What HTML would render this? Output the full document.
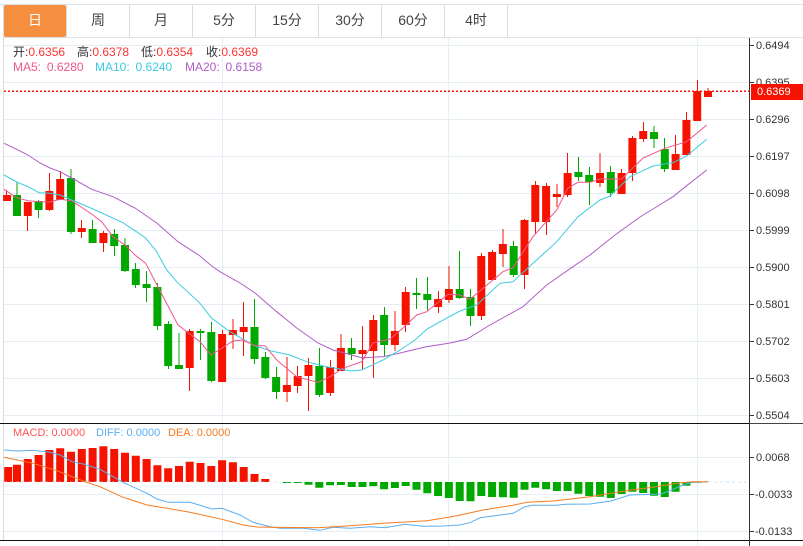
<!DOCTYPE html>
<html><head><meta charset="utf-8"><style>
html,body{margin:0;padding:0;background:#fff}
#w{position:relative;width:803px;height:546px;overflow:hidden;background:#fff;font-family:"Liberation Sans","Noto Sans CJK SC",sans-serif}
svg{position:absolute;left:0;top:0}
.t{position:absolute;top:5px;height:32px;line-height:31px;width:62px;text-align:center;font-size:14px;color:#444;font-family:"Liberation Sans","Noto Sans CJK SC",sans-serif}
.l{position:absolute;font-size:12px;line-height:16px;white-space:nowrap}
.m{font-size:11px}
.a{position:absolute;left:756px;font-size:11px;line-height:14px;color:#333}
</style></head><body><div id="w">
<svg width="803" height="546" viewBox="0 0 803 546" fill="none">
<!-- toolbar -->
<path d="M0 4.5H803M4 37.5H803" stroke="#dfe2e4"/>
<path d="M66.5 5V37M129.5 5V37M192.5 5V37M255.5 5V37M318.5 5V37M381.5 5V37M444.5 5V37M507.5 5V37" stroke="#d9dcde"/>
<path d="M3.5 4V423M3.5 424V540" stroke="#dcdcdc"/>
<rect x="4" y="5" width="62" height="32" rx="2" fill="#f68e3f"/>
<!-- grid -->
<path d="M4 45.5H749M4 82.5H749M4 119.5H749M4 156.5H749M4 193.5H749M4 230.5H749M4 267.5H749M4 304.5H749M4 341.5H749M4 378.5H749M4 415.5H749M4 457.5H749M4 494.5H749M4 531.5H749" stroke="#e4edf3"/>
<path d="M222.5 38V423M448.5 38V423M697.5 38V423M222.5 424V546M448.5 424V546M697.5 424V546" stroke="#e7eff6"/>
<!-- MACD bars -->
<path stroke="#f51300" stroke-width="8" d="M8.2 467V482M17 464.7V482M27.8 459V482M38.6 455V482M49.4 450V482M60.2 448.3V482M71 451.7V482M81.8 449V482M92.6 448V482M103.4 446.3V482M114.2 449V482M125 452.7V482M135.8 455.7V482M146.6 459V482M157.4 465.3V482M168.2 468.3V482M179 466V482M189.7 461.7V482M200.5 463V482M211.3 466V482M222.1 460.3V482M232.9 462.3V482M243.7 467V482M254.5 474V482M265.3 479V482"/>
<path stroke="#00a800" stroke-width="8" d="M286.9 482V483M297.7 482V483M308.5 482V484.7M319.3 482V487.7M330.1 482V485.3M340.9 482V485M351.7 482V487M362.5 482V487M373.3 482V486.3M384.1 482V489.3M394.9 482V488M405.7 482V486M416.5 482V489.7M427.3 482V493.3M438.1 482V496M448.9 482V498M459.7 482V501M470.5 482V501.3M481.3 482V496M492.1 482V497M502.9 482V497.3M513.7 482V497.7M524.5 482V489.7M535.3 482V487.7M546.1 482V489.3M556.9 482V491M567.6 482V491M578.4 482V493.7M589.2 482V496M600 482V496.7M610.8 482V498M621.6 482V494M632.4 482V491.7M643.2 482V493M654 482V495.7M664.8 482V497M675.6 482V491.7M686.4 482V485.7M697.2 482V482.8"/>
<path d="M708 482H746" stroke="#c5e6f5" stroke-dasharray="3 3"/>
<path d="M4 482H300" stroke="#c5e6f5" stroke-dasharray="3 3" stroke-opacity=".6"/>
<!-- MACD lines -->
<polyline stroke="#5aaef0" points="4,450 17,451 33,450.3 50,452.3 60,455 72,461.7 83,464 100,469.3 113,476.7 123,482.3 147,493.3 157,499 168,502.3 190,502.3 212,509 222,508.3 240,515 253,522.3 270,526.7 280,528.3 303,528.3 320,530.3 333,527.3 350,528.3 370,526.7 385,527.7 405,524.3 423,526.3 443,526 460,525 470,522.7 480,517.7 493,516 513,513.3 525,506.7 533,505.3 556,505.3 566,504.3 590,504 611,501 630,495 661,494 670,490.7 683,485 693,482.3 708,481.7"/>
<polyline stroke="#f77b1c" points="4,457.3 33,463.3 57,470.7 83,481 100,486.7 123,497.3 147,505 167,508.3 190,512.3 222,519.3 243,525 257,527 270,527.3 317,527.7 350,525.7 383,523.3 427,520.7 457,515.7 483,510 513,505.3 527,502.3 553,501 590,496.7 620,491.7 656,486.7 680,482.7 693,481.7 708,481.7"/>
<!-- wicks -->
<path stroke="#f51300" d="M6.5 190V195M27.5 216V231M49.5 173V211M60.5 171V179M81.5 220V238M103.5 231V252M189.5 329V391M222.5 330V334M233 319V349M243.5 302V356M287 357V402M297.5 366V393M308.5 358V411M330.5 360V396M341 334V348M362.5 326V370M373.5 315V378M395 311V351M405.5 287V332M438.5 291V313M449 266V303M481.5 253V320M492.5 250V252M503 229V267M524.5 219V289M535.5 181V234M546.5 183V235M557 184V207M567.5 153V197M600 153V187M621.5 169V173M632.5 136V181M643.5 122V142M675.5 135V154M686.5 112V120M697.5 80V91M708 88V91"/>
<path stroke="#00a800" d="M17 182V195M38.5 200V218M71 169V234M92.5 220V229M114.5 229V256M125 238V272M135.5 263V288M146.5 271V302M157.5 283V330M168.5 321V369M179 333V365M200.5 329V360M211.5 322V382M254.5 299V364M265.5 352V379M276.5 367V399M319.5 348V397M351.5 338V360M384.5 307V356M416.5 278V309M427.5 277V311M459.5 251V299M470.5 289V326M513.5 241V277M578.5 157V181M589.5 167V205M610.5 166V197M654 126V148M664.5 138V172"/>
<!-- bodies -->
<path stroke="#f51300" stroke-width="8" d="M7.1 195V201M27.8 202V216M49.4 191V210M60.2 179V200M81.8 228V232M103.4 233V243M189.7 331V368M222.1 334V382M232.9 330V335M243.7 327V332M286.9 385V392M297.7 376V386M308.5 365V376M330.1 367V393M340.9 348V371M362.5 350V354M373.3 320V351M394.9 331V345M405.7 292V325M438.1 299V307M448.9 289V300M481.3 256V316M492.1 252V280M502.9 244V254M524.5 220V275M535.3 185V222M546.1 186V222M556.9 194V197M567.6 173V195M600 173V183M621.6 173V194M632.4 138V173M643.2 131V139M675.6 154V170M686.4 120V155M697.2 91V121M708 91V97"/>
<path stroke="#00a800" stroke-width="8" d="M17 195V216M38.6 201V210M71 178V232M92.6 229V243M114.2 234V246M125 245V271M135.8 269V285M146.6 284V288M157.4 287V326M168.2 324V366M179 365V369M200.5 331V333M211.3 332V381M254.5 327V359M265.3 357V378M276.1 377V392M319.3 366V395M351.7 348V354M384.1 315V345M416.5 293V295M427.3 294V300M459.7 289V298M470.5 297V316M513.7 246V275M578.4 172V177M589.2 175V182M610.8 172V193M654 132V139M664.8 149V169"/>
<!-- MA lines -->
<polyline stroke="#b05cc8" points="4,143.3 16.7,149.3 28,155 40,163 50,168 60,171.7 71.7,178 91.7,189.3 113,196.7 135,208 156.7,223 178,241.7 200,256 211.7,266 220,271.7 240,283 255,293 276.7,311.7 296.7,328 318,343 333,350 361.7,357.7 383,356.7 400,353 425,347 450,343 466.7,339.3 490,325 523,306.7 546.7,285 573,266.7 590,255 615,235 640,217 653,209 673,196.7 686.7,185.7 706.7,170"/>
<polyline stroke="#3bcbe0" points="4,175 16.7,182 28,186.7 39,192.7 50,193.3 60,195 71.7,200 93,209 123,222.7 145.7,238 156.7,251.7 166.7,270 176.7,281.7 200,303.3 211.7,318.3 230,331.7 253,345 270,350.7 290,355 306.7,361.7 326.7,366.7 351.7,371 361.7,370 383,360 400,350 415,340 426.7,329.3 448,317.3 460,311 476.7,305 500,283.3 513,281.7 533,263.3 556.7,241.7 578,216.7 586.7,210 600,200 610,196 630,176.7 653,166 673,162.7 686.7,156 706.7,139.3"/>
<polyline stroke="#f0558f" points="4,189.3 16.7,197.7 28,200.7 39,201.7 50,202 60,199.3 71.7,200.7 93,215 101.7,221.7 113,236.7 125,245 135,255 145.7,263.3 157,285 178,325 200,341.7 211,355 233,341 243,340 255,345.7 265,345.7 276.7,360 296.7,376.7 318,382.3 330,376.7 343,368.3 361.7,361.7 373,343 390,339 403,328 416.7,315 426.7,311.7 448,294.3 460,295 470,299.3 493,280 503,271.7 513,267.7 533,236.7 556.7,210 568,188 578,182.3 590,182.3 600,179 621.7,179 643,158 665,148.3 686.7,141.7 706.7,125"/>
<!-- price line -->
<path d="M4 91.2H749" stroke="#ff1414" stroke-width="1.5" stroke-dasharray="2 2"/>
<!-- axis -->
<path d="M0 423.5H749" stroke="#111"/><path d="M749 423.5H803" stroke="#444"/>
<path d="M0 540.5H803" stroke="#111"/>
<path d="M749.5 38V546" stroke="#333"/>
<path d="M750 45.5H754M750 82.5H754M750 119.5H754M750 156.5H754M750 193.5H754M750 230.5H754M750 267.5H754M750 304.5H754M750 341.5H754M750 378.5H754M750 415.5H754M750 457.5H754M750 494.5H754M750 531.5H754" stroke="#333"/>
</svg>
<div class="t" style="left:4px;color:#fff">日</div>
<div class="t" style="left:67px">周</div>
<div class="t" style="left:130px">月</div>
<div class="t" style="left:193px">5分</div>
<div class="t" style="left:256px">15分</div>
<div class="t" style="left:319px">30分</div>
<div class="t" style="left:382px">60分</div>
<div class="t" style="left:445px">4时</div>
<div class="l" style="left:13px;top:44px;color:#333">开:<span style="color:#f33">0.6356</span></div>
<div class="l" style="left:77px;top:44px;color:#333">高:<span style="color:#f33">0.6378</span></div>
<div class="l" style="left:141px;top:44px;color:#333">低:<span style="color:#f33">0.6354</span></div>
<div class="l" style="left:206px;top:44px;color:#333">收:<span style="color:#f33">0.6369</span></div>
<div class="l" style="left:13px;top:59px;color:#f0558f;word-spacing:2.5px">MA5: 0.6280</div>
<div class="l" style="left:95px;top:59px;color:#3bcbe0;word-spacing:2.5px">MA10: 0.6240</div>
<div class="l" style="left:185px;top:59px;color:#b05cc8;word-spacing:2.5px">MA20: 0.6158</div>
<div class="l m" style="left:13px;top:425px;color:#f55">MACD: 0.0000</div>
<div class="l m" style="left:96px;top:425px;color:#5aaef0">DIFF: 0.0000</div>
<div class="l m" style="left:168px;top:425px;color:#f77b1c">DEA: 0.0000</div>
<div class="a" style="top:39px">0.6494</div>
<div class="a" style="top:76px">0.6395</div>
<div class="a" style="top:113px">0.6296</div>
<div class="a" style="top:150px">0.6197</div>
<div class="a" style="top:187px">0.6098</div>
<div class="a" style="top:224px">0.5999</div>
<div class="a" style="top:261px">0.5900</div>
<div class="a" style="top:298px">0.5801</div>
<div class="a" style="top:335px">0.5702</div>
<div class="a" style="top:372px">0.5603</div>
<div class="a" style="top:409px">0.5504</div>
<div class="a" style="top:84px;left:751px;width:46px;height:16px;line-height:16px;padding-left:6px;color:#fff;background:#f51300">0.6369</div>
<div class="a" style="top:451px">0.0068</div>
<div class="a" style="top:488px;left:755px">-0.0033</div>
<div class="a" style="top:525px;left:755px">-0.0133</div>
</div></body></html>
